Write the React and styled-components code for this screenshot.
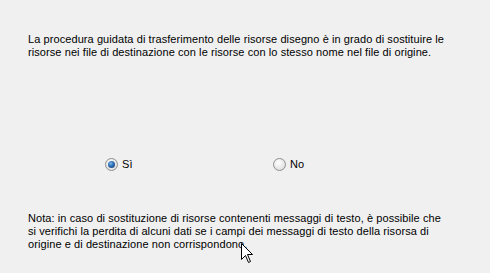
import React from 'react';
import styled, { createGlobalStyle } from 'styled-components';

const GlobalStyle = createGlobalStyle`
    html, body {
        margin: 0;
        padding: 0;
        background: #f0f0f0;
    }
`;

const Page = styled.div`
    position: relative;
    width: 490px;
    height: 273px;
    box-sizing: border-box;
    padding: 33px 0 0 28px;
    background: #f0f0f0;
    font-family: 'Liberation Sans', Arial, sans-serif;
    font-size: 11px;
    line-height: 13px;
    letter-spacing: 0.08px;
    color: #000;
    overflow: hidden;
`;

const Text = styled.p`
    margin: 0;
    white-space: nowrap;
`;

const Options = styled.div`
    display: flex;
    margin: 99px 0 0 77px;
    height: 13px;
`;

const Option = styled.label`
    display: flex;
    align-items: center;
    gap: 4px;
    width: 168px;
`;

const Radio = styled.span`
    box-sizing: border-box;
    width: 13px;
    height: 13px;
    border-radius: 50%;
    border: 1px solid #8e8f8f;
    background: radial-gradient(circle at 40% 35%, #ffffff 0%, #e6e6e6 60%, #d0d0d0 100%);
    display: flex;
    align-items: center;
    justify-content: center;

    &::after {
        content: '';
        display: ${(p) => (p.checked ? 'block' : 'none')};
        width: 7px;
        height: 7px;
        border-radius: 50%;
        background: radial-gradient(circle at 40% 35%, #7fb7e8 0%, #2b6bb0 45%, #163a6a 100%);
    }
`;

const Note = styled(Text)`
    margin-top: 41px;
`;

const Cursor = styled.svg`
    position: absolute;
    left: 241px;
    top: 243px;
`;

export default function App() {
    return (
        <>
            <GlobalStyle />
            <Page>
                <Text>
                    La procedura guidata di trasferimento delle risorse disegno è in grado di sostituire le
                    <br />
                    risorse nei file di destinazione con le risorse con lo stesso nome nel file di origine.
                </Text>
                <Options>
                    <Option>
                        <Radio checked />
                        Sì
                    </Option>
                    <Option>
                        <Radio />
                        No
                    </Option>
                </Options>
                <Note>
                    Nota: in caso di sostituzione di risorse contenenti messaggi di testo, è possibile che
                    <br />
                    si verifichi la perdita di alcuni dati se i campi dei messaggi di testo della risorsa di
                    <br />
                    origine e di destinazione non corrispondono.
                </Note>
                <Cursor width="13" height="21" viewBox="0 0 13 21">
                    <path
                        d="M0.5 0.5 L0.5 16.5 L4.5 12.5 L7.5 19.5 L9.5 18.5 L6.5 11.5 L11.5 11.5 Z"
                        fill="#fff"
                        stroke="#000"
                        strokeWidth="1"
                        strokeLinejoin="miter"
                    />
                </Cursor>
            </Page>
        </>
    );
}
